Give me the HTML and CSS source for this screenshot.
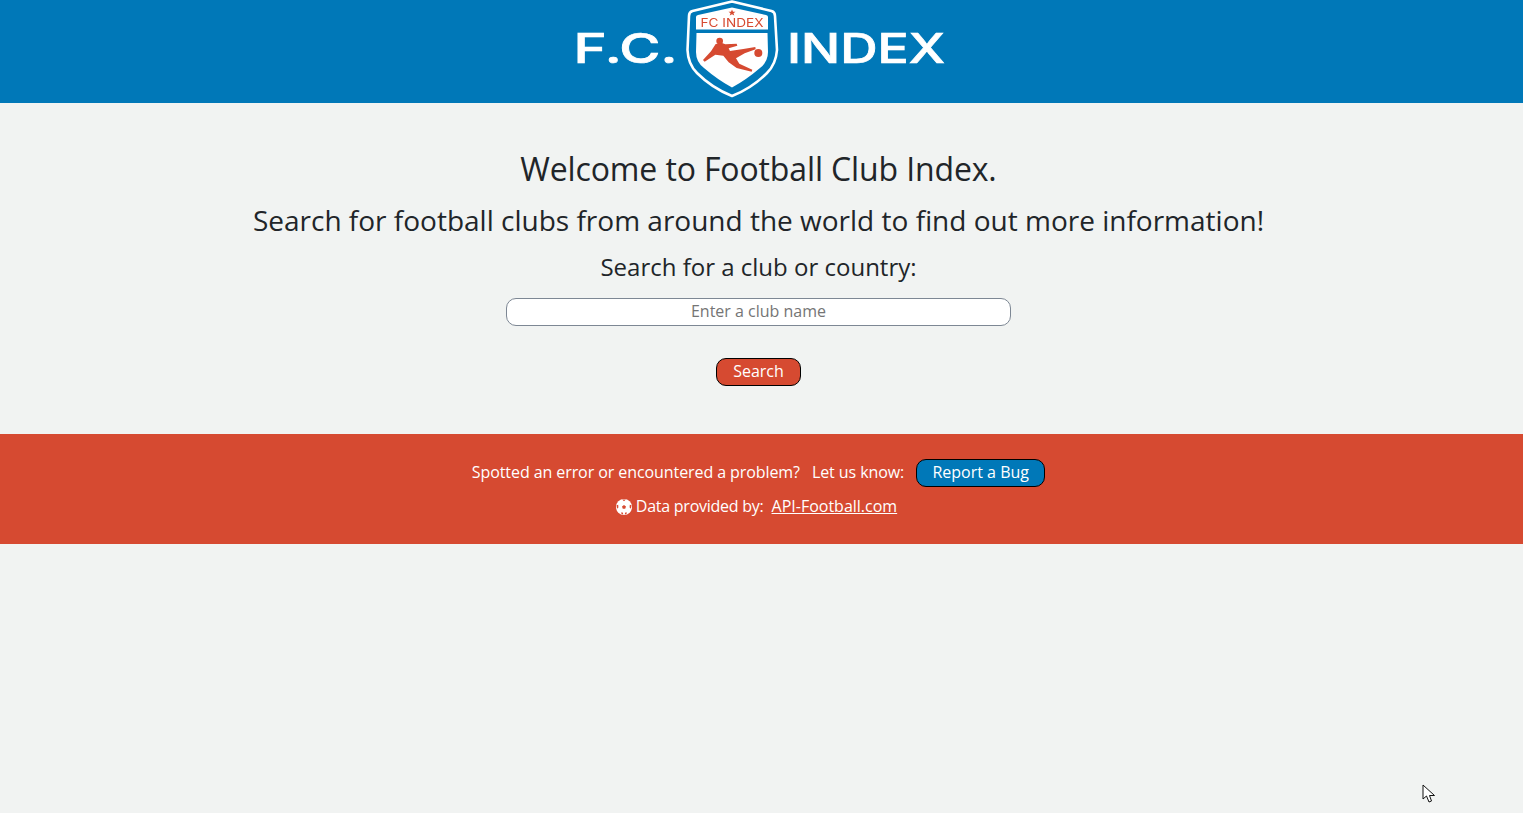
FILE: index.html
```html
<!DOCTYPE html>
<html lang="en">
<head>
    <meta charset="UTF-8">
    <meta name="viewport" content="width=device-width, initial-scale=1.0">
    <title>Football Club Index</title>
    <link rel="stylesheet" href="styles.css">
</head>
<body>
    <header class="site-header">
        <svg class="logo" width="371" height="103" viewBox="-1 0 371 103">
            <text class="logo-word" x="-1.500" y="63" textLength="104" lengthAdjust="spacingAndGlyphs">F.C.</text>
            <text class="logo-word" x="212" y="63" textLength="158" lengthAdjust="spacingAndGlyphs">INDEX</text>
            <g transform="translate(105 0)">
                <path d="M52 1.500 L12.500 11 Q9 12 9 16 L7.500 50 Q8 64 17 73 Q32 88 52 96 Q72 88 87 73 Q96 64 97 50 L95 16 Q95 12 91.500 11 Z" fill="#0078b8" stroke="#fff" stroke-width="2.600" stroke-linejoin="round"/>
                <path d="M52 7.500 L18 15 Q16 15.500 16 17 L16 29.500 L88 29.500 L88 17 Q88 15.500 86 15 Z" fill="#fff"/>
                <path d="M16.500 33 L87.500 33 L88 52 Q88 62 80 68 Q66 80 52 87.500 Q38 80 24 68 Q16 62 16 52 Z" fill="#fff"/>
                <polygon points="52,9.500 53,11.800 55.500,11.800 53.500,13.300 54.300,15.500 52,14.200 49.700,15.500 50.500,13.300 48.500,11.800 51,11.800" fill="#d64a31"/>
                <text class="logo-badge" x="20.500" y="26.500" textLength="63" lengthAdjust="spacingAndGlyphs">FC INDEX</text>
                <g transform="scale(0.3333)" fill="#d64a31">
                    <circle cx="119" cy="123" r="10"/>
                    <circle cx="235" cy="159" r="12"/>
                    <path d="M107 132 L126 129 L136 133 L170 131 L172 137 L146 145 L150 153 L190 147 L226 141 L227 148 L194 160 L168 175 L178 191 L217 209 L215 215 L170 204 L146 187 L130 167 L106 164 L74 185 L69 180 L93 154 Z"/>
                </g>
            </g>
        </svg>
    </header>

    <main class="search-section">
        <h1>Welcome to Football Club Index.</h1>
        <h2>Search for football clubs from around the world to find out more information!</h2>
        <form class="search-form">
            <label for="clubSearch">Search for a club or country:</label>
            <input type="text" id="clubSearch" placeholder="Enter a club name">
            <button type="button" class="btn btn-search">Search</button>
        </form>
    </main>

    <footer class="site-footer">
        <p class="footer-row">
            <span class="footer-text">Spotted an error or encountered a problem?</span>
            <span class="footer-text">Let us know:</span>
            <a href="#" class="btn btn-report">Report a Bug</a>
        </p>
        <p class="footer-row footer-credit">
            <svg class="ball-icon" width="16" height="16" viewBox="0 0 16 16">
                <circle cx="8" cy="8" r="8" fill="#fff"/>
                <polygon points="8,6 10,7.500 9.200,9.800 6.800,9.800 6,7.500" fill="#d64a31"/>
                <path d="M6.200 0.600 L9.800 0.600 L8 2.200 Z M0.600 6.300 L2.200 5.800 L2.400 8.600 L1 9.800 Z M15.400 6.300 L13.800 5.800 L13.600 8.600 L15 9.800 Z M5 13.400 L6.800 13.600 L7.300 15.400 L5.600 15 Z M11 13.400 L9.200 13.600 L8.700 15.400 L10.400 15 Z" fill="#d64a31"/>
            </svg>
            <span class="footer-text credit-text">Data provided by:</span>
            <a href="#" class="credit-link">API-Football.com</a>
        </p>
    </footer>

    <svg class="cursor" width="14" height="20" viewBox="0 0 14 20">
        <path d="M1 1 L1 15 L4.500 12 L7 18 L9.500 17 L7.500 11.500 L12.500 11.500 Z" fill="#fff" stroke="#111" stroke-width="1"/>
    </svg>
</body>
</html>
```

FILE: styles.css
```css
body {
    font-family: "Open Sans", "Noto Sans", sans-serif;
    background-color: #f1f3f2;
    color: #212529;
    margin: 0;
    padding: 0;
    min-height: 813px;
    position: relative;
    overflow: hidden;
}

.site-header {
    background-color: #0078b8;
    height: 103px;
    display: flex;
    justify-content: center;
    padding-right: 4px;
}

.logo {
    filter: blur(0.3px);
}

.logo-word {
    font-family: Inter, sans-serif;
    font-weight: 500;
    font-size: 41px;
    fill: #fff;
    stroke: #fff;
    stroke-width: 0.7px;
}

.logo-badge {
    font-family: Inter, sans-serif;
    font-weight: 400;
    font-size: 11.500px;
    fill: #d64a31;
}

.search-section {
    display: flex;
    flex-direction: column;
    align-items: center;
    padding: 46px 6px 48px 0;
    text-align: center;
}

h1 {
    font-size: 32px;
    font-weight: 400;
    line-height: 40px;
    letter-spacing: -0.13px;
    margin: 0 0 11px;
}

h2 {
    font-size: 28px;
    font-weight: 400;
    line-height: 40px;
    margin: 0 0 11px;
}

.search-form {
    display: flex;
    flex-direction: column;
    align-items: center;
}

label {
    font-size: 24px;
    line-height: 32px;
    margin-bottom: 15px;
}

input[type="text"] {
    box-sizing: border-box;
    width: 505px;
    height: 28px;
    padding: 0 10px 2px;
    border: 1px solid #7d8794;
    border-radius: 10px;
    background-color: #fff;
    font-family: inherit;
    font-size: 16px;
    text-align: center;
    margin-bottom: 32px;
}

input::placeholder {
    color: #757575;
}

.btn {
    box-sizing: border-box;
    display: inline-flex;
    align-items: center;
    justify-content: center;
    height: 28px;
    padding-bottom: 2px;
    border: 1px solid #000;
    border-radius: 10px;
    color: #fff;
    font-family: inherit;
    font-size: 16px;
    text-decoration: none;
    cursor: pointer;
}

.btn-search {
    width: 85px;
    padding-bottom: 4px;
    background-color: #d64a31;
}

.btn-report {
    width: 129px;
    background-color: #0078b8;
}

.site-footer {
    background-color: #d64a31;
    color: #fff;
    height: 110px;
    box-sizing: border-box;
    padding: 25px 6px 0 0;
    font-size: 16px;
}

.footer-row {
    display: flex;
    justify-content: center;
    align-items: center;
    gap: 12px;
    height: 28px;
    margin: 0 0 6px;
}

.footer-text {
    letter-spacing: -0.08px;
    padding-bottom: 2px;
}

.footer-credit {
    gap: 0;
    padding-right: 4px;
}

.credit-text {
    letter-spacing: -0.25px;
}

.ball-icon {
    margin-right: 4px;
}

.credit-link {
    color: #fff;
    margin-left: 8px;
    padding-bottom: 2px;
}

.cursor {
    position: absolute;
    left: 1422px;
    top: 784px;
}
```
